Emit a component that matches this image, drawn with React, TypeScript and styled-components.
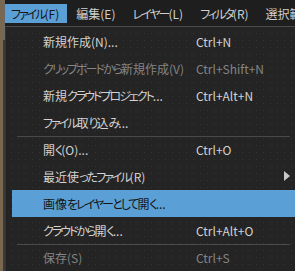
import React from "react";
import styled, { createGlobalStyle } from "styled-components";

const Global = createGlobalStyle`
  html, body { margin: 0; padding: 0; background: #1f1f1f; }
  body {
    font-family: "Noto Sans CJK JP", "Noto Sans", sans-serif;
    font-feature-settings: "palt";
  }
`;

const Page = styled.div`
  display: flex;
  width: 295px;
  height: 271px;
  overflow: hidden;
  background: #1f1f1f;
`;

const LeftStrip = styled.div`
  width: 5px;
  flex: none;
  display: flex;
`;

const Brown = styled.div`
  width: 3px;
  background: #7a6750;
`;

const Scroll = styled.div`
  width: 2px;
  background: linear-gradient(#6a6a6a 0 40px, #3a3a3a 40px);
`;

const Main = styled.div`
  flex: 1;
  display: flex;
  flex-direction: column;
  min-width: 0;
`;

const MenuBar = styled.div`
  height: 26px;
  display: flex;
  align-items: flex-start;
  padding-top: 4px;
  box-sizing: border-box;
  background: #1e1e1e;
  white-space: nowrap;
  overflow: hidden;
`;

const BarItem = styled.div<{ $active?: boolean }>`
  flex: none;
  height: 19px;
  line-height: 19px;
  padding: 0 8px 0 6px;
  margin-right: 3px;
  font-size: 12px;
  color: ${(p) => (p.$active ? "#161616" : "#cfcfcf")};
  background: ${(p) => (p.$active ? "#5a9fd6" : "transparent")};
`;

const Kana = styled.span`
  letter-spacing: -2px;
`;

const Panel = styled.div`
  flex: 1;
  border-top: 1px solid #4a4a4a;
  border-left: 1px solid #333;
  padding: 1px 0 0 6px;
  background-color: #242424;
  background-image: radial-gradient(circle, #363636 0.6px, transparent 0.9px);
  background-size: 7px 7px;
  background-position: 2px 3px;
`;

const Item = styled.div<{ $active?: boolean; $disabled?: boolean }>`
  position: relative;
  height: 27px;
  display: flex;
  align-items: center;
  padding-left: 31px;
  font-size: 12px;
  white-space: nowrap;
  color: ${(p) => (p.$active ? "#151515" : p.$disabled ? "#858585" : "#d2d2d2")};
  background: ${(p) => (p.$active ? "#5a9fd6" : "transparent")};
`;

const Separator = styled.div`
  height: 1px;
  margin: 0 0 -1px 5px;
  width: 273px;
  background: #4a4a4a;
  position: relative;
  z-index: 1;
`;

const Label = styled.span`
  width: 153px;
  flex: none;
`;

const Shortcut = styled.span`
  flex: none;
`;

const Arrow = styled.svg`
  position: absolute;
  left: 272px;
  top: 8px;
`;

const KANA_RUN = /([\u3040-\u30ff]+)/;

function JP({ text }: { text: string }) {
  const parts = text.split(KANA_RUN);
  return (
    <>
      {parts.map((p, i) =>
        i % 2 === 1 ? <Kana key={i}>{p}</Kana> : <React.Fragment key={i}>{p}</React.Fragment>
      )}
    </>
  );
}

type Entry = {
  label: string;
  shortcut?: string;
  disabled?: boolean;
  active?: boolean;
  submenu?: boolean;
  sepBefore?: boolean;
};

const entries: Entry[] = [
  { label: "新規作成(N)...", shortcut: "Ctrl+N" },
  { label: "クリップボードから新規作成(V)", shortcut: "Ctrl+Shift+N", disabled: true },
  { label: "新規クラウドプロジェクト...", shortcut: "Ctrl+Alt+N" },
  { label: "ファイル取り込み..." },
  { label: "開く(O)...", shortcut: "Ctrl+O", sepBefore: true },
  { label: "最近使ったファイル(R)", submenu: true },
  { label: "画像をレイヤーとして開く...", active: true },
  { label: "クラウドから開く...", shortcut: "Ctrl+Alt+O" },
  { label: "保存(S)", shortcut: "Ctrl+S", disabled: true, sepBefore: true },
];

const menus = ["ファイル(F)", "編集(E)", "レイヤー(L)", "フィルタ(R)", "選択範囲(S)"];

export default function App() {
  return (
    <>
      <Global />
      <Page>
        <LeftStrip>
          <Brown />
          <Scroll />
        </LeftStrip>
        <Main>
          <MenuBar>
            {menus.map((m, i) => (
              <BarItem key={m} $active={i === 0}>
                <JP text={m} />
              </BarItem>
            ))}
          </MenuBar>
          <Panel>
            {entries.map((e, i) => (
              <React.Fragment key={i}>
                {e.sepBefore && <Separator />}
                <Item $active={e.active} $disabled={e.disabled}>
                  <Label>
                    <JP text={e.label} />
                  </Label>
                  {e.shortcut && <Shortcut>{e.shortcut}</Shortcut>}
                  {e.submenu && (
                    <Arrow width="6" height="10" viewBox="0 0 6 10">
                      <path d="M0 0 L6 5 L0 10 Z" fill="#c8c8c8" />
                    </Arrow>
                  )}
                </Item>
              </React.Fragment>
            ))}
          </Panel>
        </Main>
      </Page>
    </>
  );
}
